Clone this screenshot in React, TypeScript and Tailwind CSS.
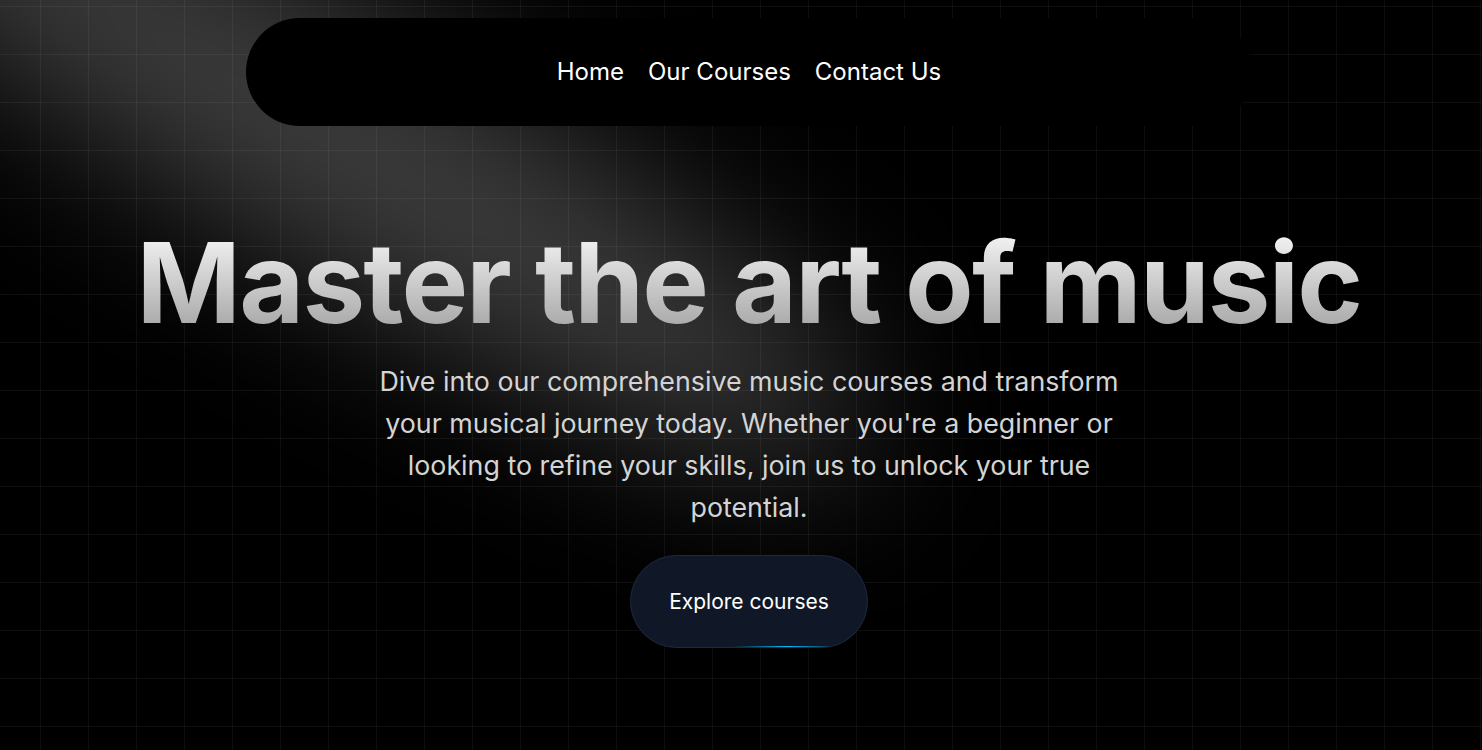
import React from "react";

const links = ["Home", "Our Courses", "Contact Us"];

// light beam from the top-left corner
const Spotlight = () => (
  <svg
    className="pointer-events-none absolute inset-0 h-full w-full"
    viewBox="0 0 1482 750"
    preserveAspectRatio="none"
    fill="none"
  >
    <defs>
      <filter id="beam" x="-50%" y="-50%" width="200%" height="200%">
        <feGaussianBlur stdDeviation="80" />
      </filter>
    </defs>
    <g filter="url(#beam)">
      <ellipse
        cx="330"
        cy="135"
        rx="620"
        ry="125"
        transform="rotate(30 330 135)"
        fill="white"
        fillOpacity="0.24"
      />
    </g>
  </svg>
);

export default function App() {
  return (
    <div className="relative min-h-screen w-full overflow-hidden bg-black font-['Inter','Liberation_Sans',sans-serif] antialiased">
      <div className="pointer-events-none absolute inset-0 bg-[linear-gradient(to_right,rgba(255,255,255,0.05)_1px,transparent_1px),linear-gradient(to_bottom,rgba(255,255,255,0.05)_1px,transparent_1px)] bg-[size:48px_48px] bg-[position:40px_6px]" />
      <Spotlight />

      <div className="relative z-10 flex flex-col items-center pl-4 pt-[18px]">
        {/* Navigering */}
        <nav className="flex h-[108px] w-[1006px] items-center justify-center gap-6 rounded-full bg-black">
          {links.map((l) => (
            <a key={l} href="#" className="text-2xl text-white">
              {l}
            </a>
          ))}
        </nav>

        <h1 className="mt-[100px] bg-gradient-to-b from-neutral-50 to-neutral-400 bg-clip-text text-[112px] font-bold leading-none tracking-[-1.8px] text-transparent">
          Master the art of music
        </h1>

        <p className="mt-[22px] max-w-3xl text-center text-[26.8px] leading-[42px] text-neutral-300">
          Dive into our comprehensive music courses and transform your musical
          journey today. Whether you're a beginner or looking to refine your
          skills, join us to unlock your true potential.
        </p>

        <button
          type="button"
          className="relative mt-[27px] overflow-hidden rounded-full border border-slate-800 bg-gray-900 px-[38px] py-8 text-[21px] leading-[27px] text-white"
        >
          Explore courses
          <span className="absolute bottom-0 left-[102px] h-px w-[108px] bg-gradient-to-r from-transparent via-sky-400 to-transparent" />
        </button>
      </div>
    </div>
  );
}
